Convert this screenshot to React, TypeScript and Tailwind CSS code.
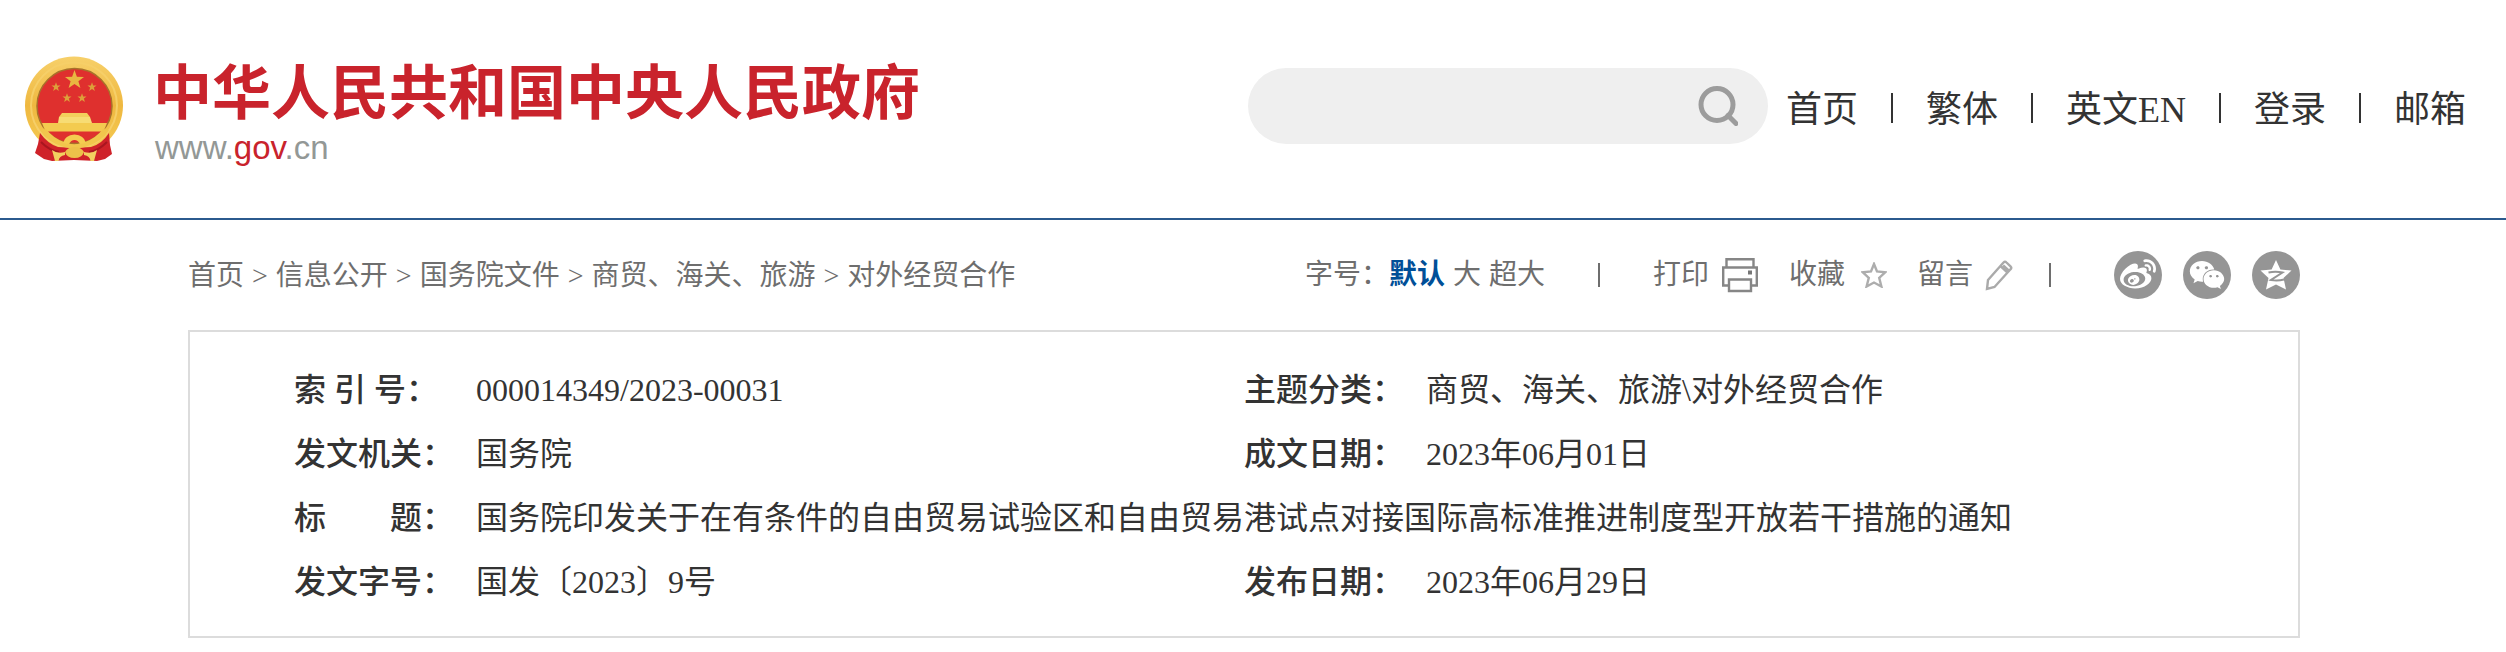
import { FaWeibo, FaWeixin } from "react-icons/fa";

const navLinks = ["首页", "繁体", "英文EN", "登录", "邮箱"];

const crumbs = ["首页", "信息公开", "国务院文件", "商贸、海关、旅游", "对外经贸合作"];

const smallStars = [
  [31, 31],
  [67, 31],
  [42, 42],
  [57, 42],
];

export default function App() {
  return (
    <div className="min-h-screen bg-white font-['Liberation_Serif','Noto_Sans_CJK_SC',serif] text-[#333]">
      <Header />
      <main className="pl-[188px] pr-[206px]">
        <div className="flex h-[110px] items-center justify-between text-[28px] leading-10 text-[#6e6e6e]">
          <Breadcrumb />
          <Toolbar />
        </div>
        <DocumentInfo />
      </main>
    </div>
  );
}

function Header() {
  return (
    <header className="flex h-[220px] items-start justify-between border-b-2 border-[#2b5a8e] pl-[25px] pr-10">
      <a href="#" className="flex pt-14">
        <Emblem />
        <div className="ml-[30px] font-['Liberation_Sans','Noto_Sans_CJK_SC',sans-serif]">
          <h1 className="text-[59px] font-bold leading-[76px] text-[#c9232c]">
            中华人民共和国中央人民政府
          </h1>
          <p className="pl-[2px] text-[33px] leading-8 text-[#939896]">
            www.<span className="text-[#c9232c]">gov</span>.cn
          </p>
        </div>
      </a>

      <div className="flex items-center pt-[68px]">
        <form className="flex h-[76px] w-[520px] items-center rounded-full bg-[#efefef] pl-8 pr-[30px]">
          <input type="text" aria-label="搜索" className="min-w-0 flex-1 bg-transparent text-[32px] outline-none" />
          <button type="button" aria-label="搜索">
            <svg className="h-10 w-10" viewBox="0 0 40 40" fill="none" stroke="#9c9c9c" strokeWidth="5">
              <circle cx="19" cy="18.5" r="16" />
              <path d="M30 29.5l8 8" strokeLinecap="round" />
            </svg>
          </button>
        </form>
        <nav className="ml-[18px] flex items-center pt-1 text-[36px] leading-[52px]">
          {navLinks.map((label, i) => (
            <div key={label} className="flex items-center">
              {i > 0 && <span className="mx-[33px] h-[30px] w-[2px] bg-[#333]" />}
              <a href="#" className="pt-1">{label}</a>
            </div>
          ))}
        </nav>
      </div>
    </header>
  );
}

function Breadcrumb() {
  return (
    <nav className="flex items-center gap-2 pt-[2px]">
      {crumbs.map((label, i) => (
        <div key={label} className="flex gap-2">
          {i > 0 && <span>&gt;</span>}
          <a href="#">{label}</a>
        </div>
      ))}
    </nav>
  );
}

function Toolbar() {
  return (
    <div className="flex items-center">
      <span>字号：</span>
      <div className="flex gap-2">
        <button type="button" className="font-bold text-[#004f98]">默认</button>
        <button type="button">大</button>
        <button type="button">超大</button>
      </div>
      <span className="mx-[53px] h-6 w-[2px] bg-[#6e6e6e]" />

      <div className="flex gap-[30px]">
        <button type="button" className="flex items-center gap-3">
          打印
          <svg className="h-9 w-[38px]" viewBox="0 0 38 36" fill="none" stroke="#868686" strokeWidth="2.4">
            <path d="M5.5 10V2.2h27V10" />
            <path d="M7 28.500H2.200V10.500h33.600v18H31" />
            <path d="M8 22.500h22V34H8z" />
            <path d="M27 15.500h4" strokeWidth="4" stroke="#777" />
          </svg>
        </button>
        <button type="button" className="flex items-center gap-4">
          收藏
          <svg className="h-[26px] w-[26px]" viewBox="0 0 26 26" fill="none" stroke="#adadad" strokeWidth="2.4">
            <path d="M13 2l3 7.500 8.200.8-6 5.500 2.200 8.700-7.400-4-7.400 4 2.200-8.700-6-5.500 8.200-.8z" />
          </svg>
        </button>
        <button type="button" className="flex items-center gap-3">
          留言
          <svg className="h-8 w-7" viewBox="0 0 28 32" fill="none" stroke="#aaa" strokeWidth="2.4">
            <path d="M2 30l1-9L18.500 3.500q1.500-1.500 3 0l4 3.800q1.500 1.500 0 3L9.500 28z" />
            <path d="M15.500 7l7 6.500" />
            <path d="M18 6.500l5.500 5" strokeWidth="3" />
          </svg>
        </button>
      </div>
      <span className="ml-[36px] mr-[63px] h-6 w-[2px] bg-[#6e6e6e]" />

      <div className="flex gap-[21px] text-white">
        <a href="#" aria-label="微博" className="flex size-12 items-center justify-center rounded-full bg-[#959595]">
          <FaWeibo className="size-9" />
        </a>
        <a href="#" aria-label="微信" className="flex size-12 items-center justify-center rounded-full bg-[#959595]">
          <FaWeixin className="size-9" />
        </a>
        <a href="#" aria-label="QQ空间" className="flex size-12 items-center justify-center rounded-full bg-[#959595]">
          <svg className="size-8" viewBox="0 0 32 32">
            <path
              d="M16 1l4.400 9.500 11.100 1-8 7.500 2.500 11.500L16 25.500 6 30.500 8.500 19l-8-7.500 11.100-1z"
              fill="currentColor"
            />
            <path
              d="M8.500 13.500q7-1.500 14 0l-11.500 7.500q7 1 13-.5"
              fill="none"
              stroke="#959595"
              strokeWidth="2"
            />
          </svg>
        </a>
      </div>
    </div>
  );
}

function DocumentInfo() {
  const th = "p-0 text-left font-medium whitespace-pre";
  const td = "p-0";

  return (
    <section className="border-2 border-[#dcdcdc] pb-[22px] pl-[104px] pt-[26px]">
      <table className="w-full table-fixed text-[32px] leading-[64px]">
        <colgroup>
          <col className="w-[182px]" />
          <col className="w-[768px]" />
          <col className="w-[182px]" />
          <col />
        </colgroup>
        <tbody>
          <tr>
            <th scope="row" className={th}>索 引 号：</th>
            <td className={td}>000014349/2023-00031</td>
            <th scope="row" className={th}>主题分类：</th>
            <td className={td}>商贸、海关、旅游\对外经贸合作</td>
          </tr>
          <tr>
            <th scope="row" className={th}>发文机关：</th>
            <td className={td}>国务院</td>
            <th scope="row" className={th}>成文日期：</th>
            <td className={td}>2023年06月01日</td>
          </tr>
          <tr>
            <th scope="row" className={th}>标　　题：</th>
            <td className={td} colSpan={3}>
              国务院印发关于在有条件的自由贸易试验区和自由贸易港试点对接国际高标准推进制度型开放若干措施的通知
            </td>
          </tr>
          <tr>
            <th scope="row" className={th}>发文字号：</th>
            <td className={td}>国发〔2023〕9号</td>
            <th scope="row" className={th}>发布日期：</th>
            <td className={td}>2023年06月29日</td>
          </tr>
        </tbody>
      </table>
    </section>
  );
}

function Emblem() {
  return (
    <svg className="h-[106px] w-[98px] shrink-0" viewBox="0 0 98 106">
      <defs>
        <linearGradient id="gold" x1="0" y1="0" x2="0" y2="1">
          <stop offset="0" stopColor="#f7d06a" />
          <stop offset="0.5" stopColor="#efb840" />
          <stop offset="1" stopColor="#f5cd55" />
        </linearGradient>
        <path id="star" d="M0-10l2.400 6.700 7.100.2-5.600 4.400 2 6.800L0 4l-5.900 4.100 2-6.800-5.600-4.400 7.100-.2z" />
      </defs>
      <circle cx="49" cy="49.500" r="49" fill="url(#gold)" />
      <circle cx="49" cy="49.500" r="43" fill="none" stroke="#f6cf68" strokeWidth="2" />
      <circle cx="49.500" cy="50" r="37.500" fill="#df302e" stroke="#a8722a" strokeWidth="1.500" />

      {/* Stars */}
      <use href="#star" transform="translate(49.500 24)" fill="#e9b741" />
      {smallStars.map(([x, y]) => (
        <use key={`${x}-${y}`} href="#star" transform={`translate(${x} ${y}) scale(0.480)`} fill="#dda03a" />
      ))}

      {/* Gate tower */}
      <path d="M37 57h25l3 4H34z" fill="#f3cf5c" />
      <path d="M34 61h31l2 6H33z" fill="#f7dc74" />
      <path d="M17 67h65l-3.500 8.500h-58z" fill="#f3cb50" />

      {/* Drapes */}
      <path d="M15 77q8 11 18 14l16 1 17-1q11-3 18-14l1 12 2 9-7 5-8 2-23-1-22 1-8-2-9-6 3-9z" fill="#cf2229" />
      <path d="M16 86q9 9 18 10M82 86q-9 9-18 10" fill="none" stroke="#a9161f" strokeWidth="2" />

      {/* Gear and ribbon knot */}
      <path d="M15 74q7 12 24 17l10 2 11-2q17-5 24-17l-6-1q-7 9-18 13l-11 3-10-3q-11-4-18-13z" fill="#f1c64c" />
      <path d="M38 87q2-8 11.500-8.500Q59 79 61 87l-6 1q-2-4-5.500-4T44 88z" fill="#f4cc50" />
      <path d="M40 96q3-5 9.500-5t9.500 5q-2 6-9.500 6T40 96z" fill="#edc04a" />
      <path d="M27 94q5 4 13 2v3q-6 1-6.500 6H30zM72 94q-5 4-13 2v3q6 1 6.500 6H69z" fill="#f2d060" />
    </svg>
  );
}
